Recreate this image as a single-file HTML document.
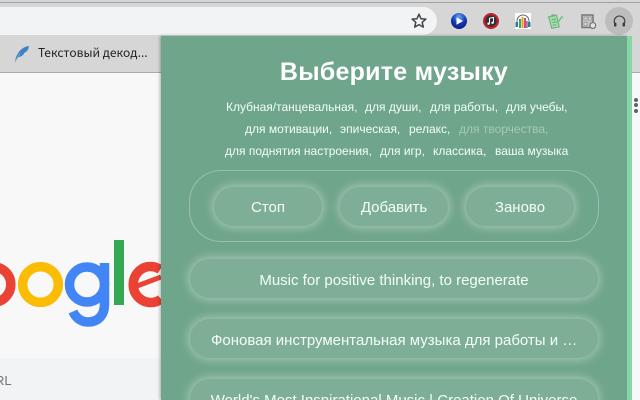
<!DOCTYPE html>
<html><head><meta charset="utf-8">
<style>
html,body{margin:0;padding:0;width:640px;height:400px;overflow:hidden;background:#f8f8f8;font-family:"Liberation Sans",sans-serif}
#root{position:relative;width:640px;height:400px;overflow:hidden;background:#f8f8f8}
.a{position:absolute}
#bar{left:0;top:0;width:640px;height:36px;background:#d6d6d6}
#line{left:0;top:2px;width:640px;height:1px;background:#a2a2a2}
#omni{left:-20px;top:7px;width:457px;height:28px;border-radius:14px;background:#f1f3f4}
#tabs{left:0;top:36px;width:640px;height:36px;background:#d6d6d6;border-bottom:1px solid #a9a9a9}
#tabt{left:38px;top:46px;font:12px/14px "Noto Sans CJK SC","Liberation Sans",sans-serif;color:#222;white-space:nowrap}
#foot{left:0;top:358px;width:161px;height:42px;background:#f1f3f4}
#rl{left:-5px;top:373px;font-size:13px;color:#70757a}
#panel{left:161px;top:36px;width:466px;height:364px;background:#6fa58a;box-shadow:-1px 0 3px rgba(0,0,0,.3);overflow:hidden}
#strip{left:627px;top:36px;width:5px;height:364px;background:#86d6a8}
h1{position:absolute;margin:0;left:161px;width:466px;top:57px;text-align:center;font:bold 25px/30px "Liberation Sans",sans-serif;color:#fff;letter-spacing:.25px}
.t{position:absolute;font-size:12px;line-height:14px;color:#f2fff7;white-space:nowrap}
.btn{position:absolute;box-sizing:border-box;height:39px;border-radius:20px;background:rgba(255,255,255,.11);box-shadow:0 0 10px 1px rgba(255,255,255,.45);color:#f3fff8;font-size:15px;line-height:41px;text-align:center;white-space:nowrap;overflow:hidden}
.l{line-height:43px}
#box{left:189px;top:170px;width:410px;height:72px;box-sizing:border-box;border:1px solid rgba(255,255,255,.3);border-radius:32px}
</style></head><body>
<div id="root">
<div class="a" id="bar"></div><div class="a" id="line"></div><div class="a" id="omni"></div>

<svg class="a" style="left:411px;top:13px" width="16" height="16" viewBox="0 0 16 16"><path d="M8 1.200l2 4.500 4.900.4-3.700 3.200 1.100 4.800L8 11.600l-4.300 2.500 1.100-4.800L1.100 6.100 6 5.700z" fill="none" stroke="#444" stroke-width="1.500" stroke-linejoin="round"/></svg>

<svg class="a" style="left:450px;top:12px" width="18" height="18" viewBox="0 0 18 18"><defs><radialGradient id="g1" cx=".5" cy=".25" r=".8"><stop offset="0" stop-color="#6aa5f0"/><stop offset=".55" stop-color="#1236b0"/><stop offset="1" stop-color="#0a1a70"/></radialGradient></defs><circle cx="9" cy="9" r="8" fill="url(#g1)"/><path d="M6.500 5.200L13 9l-6.500 3.800z" fill="#fff"/></svg>

<svg class="a" style="left:482px;top:12px" width="18" height="18" viewBox="0 0 18 18"><circle cx="9" cy="9" r="6.800" fill="#2e3236" stroke="#c0202c" stroke-width="2.400"/><path d="M7.500 11.500V6.300l4-.9v5.100" fill="none" stroke="#fff" stroke-width="1"/><circle cx="6.500" cy="11.700" r="1.200" fill="#fff"/><circle cx="10.500" cy="10.800" r="1.200" fill="#fff"/></svg>

<svg class="a" style="left:515px;top:13px" width="16" height="16" viewBox="0 0 16 16"><rect width="16" height="16" fill="#fff"/><path d="M2 10V8a6 6 0 0 1 12 0v2" fill="none" stroke="#666" stroke-width="1"/><rect x=".5" y="9" width="2.500" height="5" fill="#2a7f8f"/><rect x="13" y="9" width="2.500" height="5" fill="#2a7f8f"/><rect x="4" y="6" width="2" height="9" fill="#3aa55a"/><rect x="6.500" y="4" width="2" height="11" fill="#e8a020"/><rect x="9" y="5" width="2" height="10" fill="#d84a7a"/><rect x="11.200" y="8" width="1.500" height="7" fill="#8a5ab0"/></svg>

<svg class="a" style="left:547px;top:13px" width="17" height="17" viewBox="0 0 16 16"><path d="M1.500 3.500L9 2l2.500 11-7 1.500z" fill="#9fdcaa" stroke="#72ad7c" stroke-width="1"/><path d="M4 1.500l3-.5.5 2-3 .5z" fill="#72ad7c"/><path d="M4.500 6.500l4-.8M5 9l4-.8M5.500 11.500l3-.6" stroke="#6aa876" stroke-width=".9"/><path d="M9 9l5-6.500 1.200 1L10.200 10z" fill="#78c086"/></svg>

<svg class="a" style="left:581px;top:14px" width="16" height="16" viewBox="0 0 16 16"><rect x="1" y="1" width="11" height="12.500" fill="#c4c4c4" stroke="#777" stroke-width="1.500"/><rect x="3" y="3" width="3" height="3" fill="#dadada" stroke="#888" stroke-width=".6"/><rect x="7.200" y="3" width="3" height="3" fill="#dadada" stroke="#888" stroke-width=".6"/><rect x="3" y="8.500" width="3" height="3" fill="#dadada" stroke="#888" stroke-width=".6"/><circle cx="11.800" cy="11.500" r="2.900" fill="#e4e4e4" stroke="#6e6e6e" stroke-width="1.100"/></svg>

<div class="a" style="left:605px;top:7px;width:28px;height:28px;border-radius:50%;background:#bdbdbd"></div>
<svg class="a" style="left:613px;top:15px" width="13" height="13" viewBox="0 0 13 13"><path d="M1.200 8V6.300a5.300 5.300 0 0 1 10.600 0V8" fill="none" stroke="#3c3c3c" stroke-width="1.100"/><rect x="1" y="7.500" width="2.400" height="4" rx=".8" fill="#3c3c3c"/><rect x="9.600" y="7.500" width="2.400" height="4" rx=".8" fill="#3c3c3c"/></svg>

<div class="a" id="tabs"></div>
<svg class="a" style="left:14px;top:45px" width="16" height="18" viewBox="0 0 16 18"><path d="M1 17C2 9 7 2 15 1c-.5 4-2.500 6-5 7 .5 0-1 3-3.500 3.500C5 12 3 13 2 14.500z" fill="#3b83c8"/><path d="M1 17.500L6 8" stroke="#8ab4d8" stroke-width=".7" fill="none"/></svg>
<div class="a" id="tabt">Текстовый декод...</div>

<svg class="a" style="left:0;top:230px" width="161" height="110" viewBox="0 230 161 110">
<circle cx="-7" cy="284.500" r="17.800" fill="none" stroke="#ea4335" stroke-width="9.500"/>
<circle cx="40.500" cy="284.500" r="17.800" fill="none" stroke="#fbbc05" stroke-width="9.500"/>
<circle cx="87" cy="284.500" r="17.500" fill="none" stroke="#4285f4" stroke-width="9.500"/>
<path d="M104.500 263V304c0 12-7 18-16.500 18-7 0-12.500-4.500-15-10.500" fill="none" stroke="#4285f4" stroke-width="9.500"/>
<rect x="114" y="240" width="10" height="65" fill="#34a853"/>
<path d="M161 299c-3 2.500-6 3.500-10 3.500-10 0-17.800-8-17.800-18s8-18 17-18c4 0 7 1 10 3" fill="none" stroke="#ea4335" stroke-width="9.500"/>
<path d="M137 286l24-9" stroke="#ea4335" stroke-width="5"/>
</svg>

<div class="a" id="foot"></div><div class="a" id="rl">RL</div>

<div class="a" style="left:634px;top:98px;width:4px;height:4px;border-radius:50%;background:#5f6368"></div>
<div class="a" style="left:634px;top:103px;width:4px;height:4px;border-radius:50%;background:#5f6368"></div>
<div class="a" style="left:634px;top:109px;width:4px;height:4px;border-radius:50%;background:#5f6368"></div>

<div class="a" id="panel"></div><div class="a" id="strip"></div>
<h1>Выберите музыку</h1>

<span class="t" style="left:226px;top:100px">Клубная/танцевальная,</span>
<span class="t" style="left:365px;top:100px">для души,</span>
<span class="t" style="left:430px;top:100px">для работы,</span>
<span class="t" style="left:506px;top:100px">для учебы,</span>

<span class="t" style="left:245px;top:122px">для мотивации,</span>
<span class="t" style="left:340px;top:122px">эпическая,</span>
<span class="t" style="left:409px;top:122px">релакс,</span>
<span class="t" style="left:459px;top:122px;color:#a5c9b6">для творчества,</span>

<span class="t" style="left:225px;top:144px">для поднятия настроения,</span>
<span class="t" style="left:380px;top:144px">для игр,</span>
<span class="t" style="left:433px;top:144px">классика,</span>
<span class="t" style="left:495px;top:144px">ваша музыка</span>

<div class="a" id="box"></div>
<div class="btn" style="left:214px;top:187px;width:108px">Стоп</div>
<div class="btn" style="left:340px;top:187px;width:108px">Добавить</div>
<div class="btn" style="left:466px;top:187px;width:108px">Заново</div>
<div class="btn l" style="left:190px;top:259px;width:408px">Music for positive thinking, to regenerate</div>
<div class="btn l" style="left:190px;top:319px;width:408px;text-align:left;padding-left:21px">Фоновая инструментальная музыка для работы и …</div>
<div class="btn l" style="left:190px;top:379px;width:408px">World's Most Inspirational Music | Creation Of Universe</div>
</div>
</body></html>
